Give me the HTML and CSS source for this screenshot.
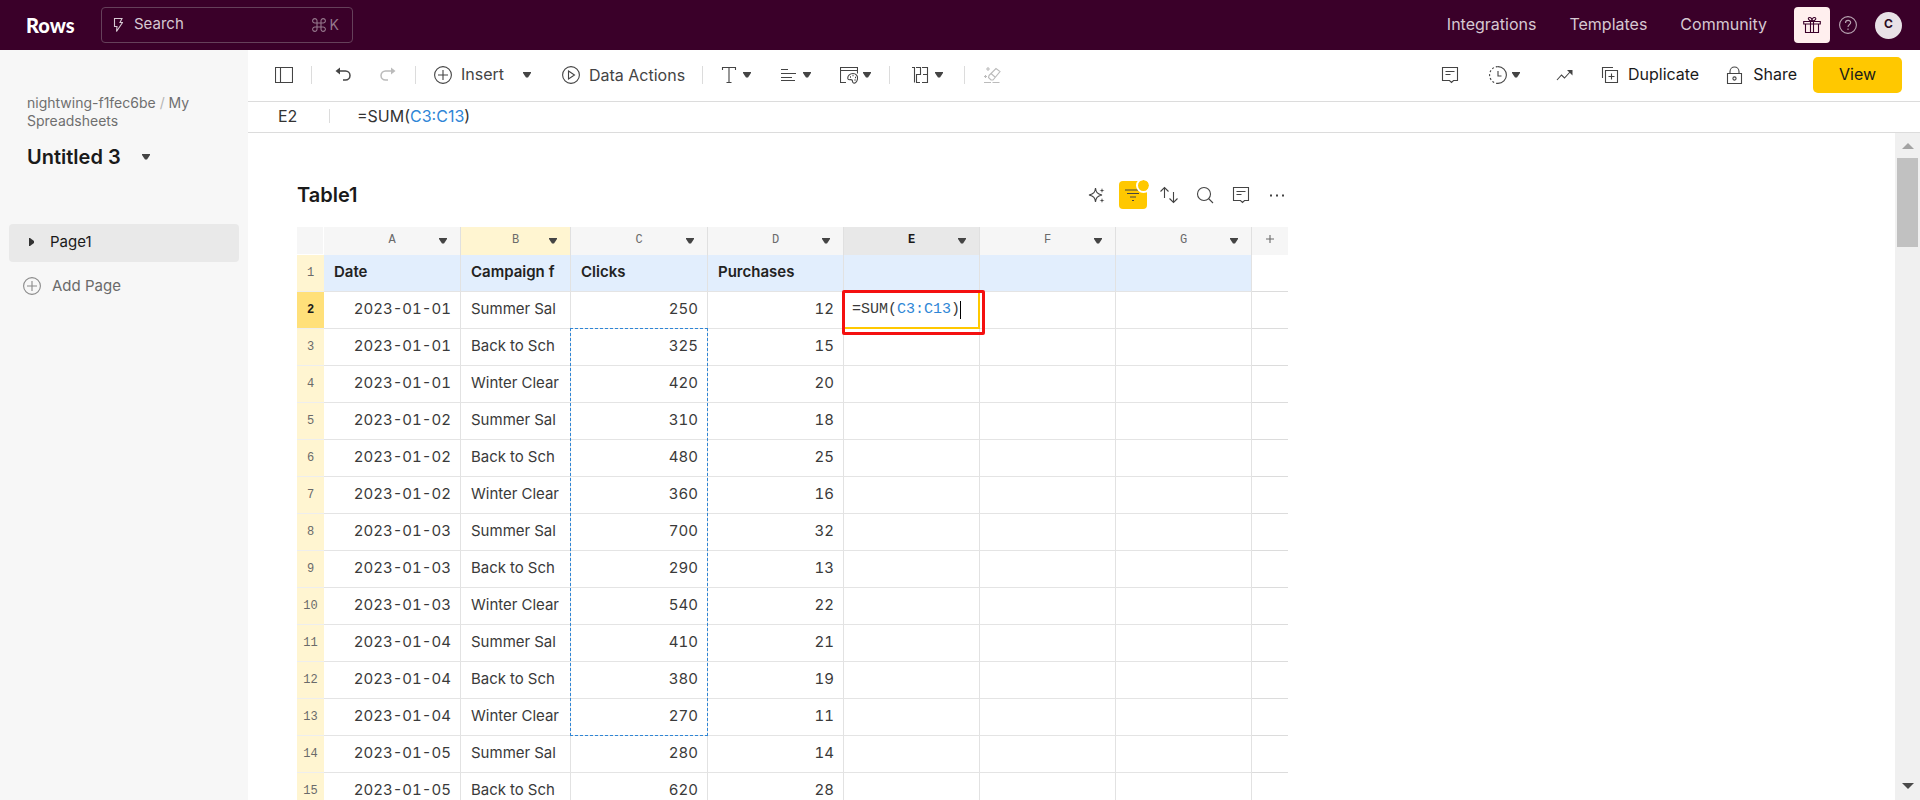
FILE: index.html
```html
<!DOCTYPE html>
<html lang="en">
<head>
<meta charset="utf-8">
<title>Untitled 3 - Rows</title>
<link rel="stylesheet" href="styles.css">
</head>
<body>
<svg class="defs" aria-hidden="true">
  <symbol id="comment" viewBox="0 0 18 18"><path d="M1.5 1.5h15v13h-4l-2 2-2-2h-7zM4.500 5.500h9M4.500 8.500h5"/></symbol>
  <symbol id="caret" viewBox="0 0 8 6"><path d="M0 0h8v1L5 5.500H3L0 1z"/></symbol>
  <symbol id="plus-circle" viewBox="0 0 18 18"><circle cx="9" cy="9" r="8.400"/><path d="M9 4v10M4 9h10"/></symbol>
</svg>

<header class="topbar">
  <a class="logo" href="#">Rows</a>
  <label class="search">
    <svg class="icon bolt" viewBox="0 0 10 14"><path d="M1.500.5h7.500L7 4.500h2.500l-6 9 .5-5H1.500z"/></svg>
    <input type="text" placeholder="Search" aria-label="Search">
    <svg class="icon command" viewBox="0 0 14 14"><path d="M5 5h4v4H5zM5 5H3a2.200 2.200 0 1 1 2-2zM9 5V3a2.200 2.200 0 1 1 2 2zM9 9h2a2.200 2.200 0 1 1-2 2zM5 9v2a2.200 2.200 0 1 1-2-2z"/></svg>
    <kbd>K</kbd>
  </label>
  <nav class="topnav">
    <a href="#">Integrations</a>
    <a href="#">Templates</a>
    <a href="#">Community</a>
  </nav>
  <button class="gift" aria-label="What's new"><svg class="icon" viewBox="0 0 18 18"><path d="M.7 5.500h16.600v2.500H.7zM2.500 8v8.500h13V8M7.500 5.500v11M10.500 5.500v11M9 5C5 5 4.500 1.500 6.500 1.500S9 3.500 9 5C9 3.500 9.500 1.500 11.500 1.500s2 3.500-2.500 3.500z"/></svg></button>
  <button class="help" aria-label="Help"><svg class="icon" viewBox="0 0 18 18"><circle cx="9" cy="9" r="8.400"/><path d="M6.500 7c0-3.500 5.200-3.300 5.200-.4C11.700 8.500 9 8.500 9 11M9 12.500v1.500"/></svg></button>
  <button class="avatar">C</button>
</header>

<div class="shell">
  <aside class="sidebar">
    <p class="crumbs"><a href="#">nightwing-f1fec6be</a> <span class="slash">/</span> <a href="#">My Spreadsheets</a></p>
    <button class="doc-title"><span>Untitled 3</span><svg class="caret"><use href="#caret"/></svg></button>
    <a class="page-link" href="#"><svg class="expander" viewBox="0 0 5 8"><path d="M0 0h1l4 3v2L1 8H0z"/></svg>Page1</a>
    <button class="add-page"><svg class="icon"><use href="#plus-circle"/></svg>Add Page</button>
  </aside>

  <main class="main">
    <div class="toolbar">
      <button class="tool" aria-label="Toggle sidebar"><svg class="icon" viewBox="0 0 18 18"><path d="M.5 1.500h17v15H.5zM5.500 1.500v15"/></svg></button>
      <span class="sep"></span>
      <button class="tool undo" aria-label="Undo"><svg class="icon" viewBox="0 0 18 18"><path d="M5 5h6.500a4.500 4.500 0 0 1 0 9H9" stroke-width="1.500"/><path class="solid" d="M1.500 5L6 1.500v7z"/></svg></button>
      <button class="tool redo faded" aria-label="Redo"><svg class="icon" viewBox="0 0 18 18"><path d="M13 5H6.500a4.500 4.500 0 0 0 0 9H9" stroke-width="1.500"/><path class="solid" d="M16.500 5L12 1.500v7z"/></svg></button>
      <span class="sep"></span>
      <button class="tool insert"><svg class="icon"><use href="#plus-circle"/></svg><span>Insert</span><svg class="caret"><use href="#caret"/></svg></button>
      <button class="tool actions"><svg class="icon" viewBox="0 0 18 18"><circle cx="9" cy="9" r="8.400"/><path d="M6.500 5l6 4-6 4z"/></svg><span>Data Actions</span></button>
      <span class="sep"></span>
      <button class="tool drop" aria-label="Text format"><svg class="icon" viewBox="0 0 18 18"><path d="M2.500 4V1.500h13V4M9 1.500v15M6.500 16.500h5"/></svg><svg class="caret"><use href="#caret"/></svg></button>
      <button class="tool drop" aria-label="Alignment"><svg class="icon" viewBox="0 0 18 18"><path d="M1 3.500h7M1 7.500h15M1 11.500h11M1 14.500h14"/></svg><svg class="caret"><use href="#caret"/></svg></button>
      <button class="tool drop" aria-label="Table style"><svg class="icon" viewBox="0 0 18 18"><path d="M6 16.500H.5v-15h17v6M.5 4.500h17"/><path d="M8 13c-1-3 2-5.500 5-5.500s5 2.500 4.500 5.500-2.500 4.500-4 4-.5-2-1.500-3-3 .5-4-1z"/><path d="M10 11h1M12.500 9.500h1M15 11.500h1M14.500 14h1" stroke-width="1.300"/></svg><svg class="caret"><use href="#caret"/></svg></button>
      <span class="sep"></span>
      <button class="tool drop number" aria-label="Number format"><svg class="icon" viewBox="0 0 18 18"><path d="M1 1.500h2.500v15M5 1.500h4.500v7H5.500v8H9M11 1.500h5.500v15H11M12 8.500h4.500"/></svg><svg class="caret"><use href="#caret"/></svg></button>
      <span class="sep last"></span>
      <button class="tool faded" aria-label="Clear format"><svg class="icon" viewBox="0 0 18 18"><path d="M6 9.500L13 2.500l4 3-7 8.500H8l-2.500-2.500zM8 7.500l4 3.500M1 16.500h7M9.500 16.500h7" /><path d="M5 1v4M3 3h4M2.500 9v3M1 10.500h3"/></svg></button>

      <div class="toolbar-right">
        <button class="tool" aria-label="Comments"><svg class="icon"><use href="#comment"/></svg></button>
        <button class="tool history" aria-label="History"><svg class="icon" viewBox="0 0 18 18"><path d="M9 .6a8.400 8.400 0 0 1 0 16.800M9 5v5h3.500"/><path d="M9 17.400A8.400 8.400 0 0 1 9 .6" stroke-dasharray="2 2"/></svg><svg class="caret"><use href="#caret"/></svg></button>
        <button class="tool trend" aria-label="Chart"><svg class="icon" viewBox="0 0 18 18"><path d="M1 14l4.500-5 3 3L14 6"/><path class="solid" d="M11 4h5.500v5.500z"/></svg></button>
        <button class="tool dark duplicate"><svg class="icon" viewBox="0 0 18 18"><path d="M4.500 4.500h12v12h-12zM1.500 12V1.500H12M10.500 7.500v6M7.500 10.500h6"/></svg><span>Duplicate</span></button>
        <button class="tool dark share"><svg class="icon" viewBox="0 0 18 18"><path d="M1.500 7.500h14v10h-14zM4 7.500V5.500a4.500 4.500 0 0 1 9 0v2"/><circle cx="8.500" cy="12.500" r="1.600"/></svg><span>Share</span></button>
        <button class="view">View</button>
      </div>
    </div>

    <div class="formula-bar">
      <output class="cell-name">E2</output>
      <span class="sep"></span>
      <div class="formula" contenteditable="true" role="textbox" aria-label="Formula">=SUM(<span class="ref">C3:C13</span>)</div>
    </div>

    <div class="workspace">
      <section class="sheet">
        <div class="sheet-head">
          <h2>Table1</h2>
          <div class="sheet-tools">
            <button aria-label="AI"><svg class="icon" viewBox="0 0 18 18"><path d="M7.500 2C8 6 9 8 14 9c-5 1-6 3-6.500 7C7 12 6 10 1 9c5-1 6-3 6.500-7z"/><path class="solid" d="M14 2l.6 1.900 1.900.6-1.900.6L14 7l-.6-1.900-1.900-.6 1.900-.6zM14 12l.6 1.900 1.900.6-1.900.6L14 17l-.6-1.900-1.900-.6 1.900-.6z"/></svg></button>
            <button class="filter" aria-label="Filter"><svg class="icon" viewBox="0 0 18 18"><path d="M1 4h16M3 7.500h12M6 11h6M8 14.500h2"/></svg></button>
            <button aria-label="Sort"><svg class="icon" viewBox="0 0 18 18"><path d="M4.500 12V1.500M.5 5.500l4-4 4 4M13.500 6v10.500M9.500 12.500l4 4 4-4"/></svg></button>
            <button aria-label="Search table"><svg class="icon" viewBox="0 0 18 18"><circle cx="8" cy="8" r="6.500"/><path d="M12.500 12.500l4.500 4.500"/></svg></button>
            <button aria-label="Table comments"><svg class="icon"><use href="#comment"/></svg></button>
            <button aria-label="More"><svg class="icon" viewBox="0 0 18 18"><path class="solid" d="M2 8.500h2v2H2zM8 8.500h2v2H8zM14 8.500h2v2h-2z"/></svg></button>
          </div>
        </div>

        <table class="grid">
          <colgroup><col class="c-num"><col class="c-wide"><col class="c-narrow"><col class="c-wide"><col><col><col><col><col class="c-add"></colgroup>
          <thead>
            <tr>
              <th></th>
              <th>A<svg class="caret"><use href="#caret"/></svg></th>
              <th class="filtered">B<svg class="caret"><use href="#caret"/></svg></th>
              <th>C<svg class="caret"><use href="#caret"/></svg></th>
              <th>D<svg class="caret"><use href="#caret"/></svg></th>
              <th class="active">E<svg class="caret"><use href="#caret"/></svg></th>
              <th>F<svg class="caret"><use href="#caret"/></svg></th>
              <th>G<svg class="caret"><use href="#caret"/></svg></th>
              <th class="add"><svg class="icon" viewBox="0 0 8 8"><path d="M4 0v8M0 4h8"/></svg></th>
            </tr>
          </thead>
          <tbody>
            <tr class="titles"><th>1</th><td>Date</td><td>Campaign f</td><td>Clicks</td><td>Purchases</td><td></td><td></td><td></td><td class="extra"></td></tr>
            <tr><th class="active">2</th><td class="num">2023-01-01</td><td>Summer Sal</td><td class="num">250</td><td class="num">12</td><td class="editing"><div class="editor" contenteditable="true" role="textbox" aria-label="Cell E2">=SUM(<span class="ref">C3:C13</span>)<span class="cursor"></span></div><span class="callout"></span></td><td></td><td></td><td class="extra"></td></tr>
            <tr><th>3</th><td class="num">2023-01-01</td><td>Back to Sch</td><td class="num">325<span class="range"></span></td><td class="num">15</td><td></td><td></td><td></td><td class="extra"></td></tr>
            <tr><th>4</th><td class="num">2023-01-01</td><td>Winter Clear</td><td class="num">420</td><td class="num">20</td><td></td><td></td><td></td><td class="extra"></td></tr>
            <tr><th>5</th><td class="num">2023-01-02</td><td>Summer Sal</td><td class="num">310</td><td class="num">18</td><td></td><td></td><td></td><td class="extra"></td></tr>
            <tr><th>6</th><td class="num">2023-01-02</td><td>Back to Sch</td><td class="num">480</td><td class="num">25</td><td></td><td></td><td></td><td class="extra"></td></tr>
            <tr><th>7</th><td class="num">2023-01-02</td><td>Winter Clear</td><td class="num">360</td><td class="num">16</td><td></td><td></td><td></td><td class="extra"></td></tr>
            <tr><th>8</th><td class="num">2023-01-03</td><td>Summer Sal</td><td class="num">700</td><td class="num">32</td><td></td><td></td><td></td><td class="extra"></td></tr>
            <tr><th>9</th><td class="num">2023-01-03</td><td>Back to Sch</td><td class="num">290</td><td class="num">13</td><td></td><td></td><td></td><td class="extra"></td></tr>
            <tr><th>10</th><td class="num">2023-01-03</td><td>Winter Clear</td><td class="num">540</td><td class="num">22</td><td></td><td></td><td></td><td class="extra"></td></tr>
            <tr><th>11</th><td class="num">2023-01-04</td><td>Summer Sal</td><td class="num">410</td><td class="num">21</td><td></td><td></td><td></td><td class="extra"></td></tr>
            <tr><th>12</th><td class="num">2023-01-04</td><td>Back to Sch</td><td class="num">380</td><td class="num">19</td><td></td><td></td><td></td><td class="extra"></td></tr>
            <tr><th>13</th><td class="num">2023-01-04</td><td>Winter Clear</td><td class="num">270</td><td class="num">11</td><td></td><td></td><td></td><td class="extra"></td></tr>
            <tr><th>14</th><td class="num">2023-01-05</td><td>Summer Sal</td><td class="num">280</td><td class="num">14</td><td></td><td></td><td></td><td class="extra"></td></tr>
            <tr><th>15</th><td class="num">2023-01-05</td><td>Back to Sch</td><td class="num">620</td><td class="num">28</td><td></td><td></td><td></td><td class="extra"></td></tr>
          </tbody>
        </table>
      </section>
      <div class="scrollbar">
        <svg class="arrow up" viewBox="0 0 12 6"><path d="M6 0l6 6H0z"/></svg>
        <div class="thumb"></div>
        <svg class="arrow down" viewBox="0 0 12 6"><path d="M0 0h12L6 6z"/></svg>
      </div>
    </div>
  </main>
</div>
</body>
</html>
```
FILE: styles.css
```css
* { box-sizing: border-box; }

body {
  margin: 0;
  height: 100vh;
  display: flex;
  flex-direction: column;
  overflow: hidden;
  background: #fff;
  color: #1a1a1a;
  font: 15px/20px Inter, "Liberation Sans", sans-serif;
}

a { color: inherit; text-decoration: none; }

button {
  margin: 0;
  padding: 0;
  border: 0;
  background: none;
  color: inherit;
  font: inherit;
  white-space: nowrap;
  display: flex;
  align-items: center;
  flex: none;
}

.defs { position: absolute; width: 0; height: 0; }

.icon {
  width: 18px;
  height: 18px;
  flex: none;
  fill: none;
  stroke: currentColor;
  stroke-width: 1.1;
}
.icon .solid { fill: currentColor; stroke: none; }

.caret { width: 8px; height: 6px; flex: none; fill: #444; }

.sep { width: 1px; height: 18px; flex: none; background: #dcdcdc; }

.ref { color: #2f86d6; }

/* Top bar */

.topbar {
  height: 50px;
  flex: none;
  display: flex;
  align-items: center;
  padding: 0 18px 0 26px;
  background: #3a0029;
  color: #d6c8d2;
}

.logo {
  width: 75px;
  color: #fff;
  font-family: Lato, sans-serif;
  font-size: 20px;
  font-weight: 900;
}

.search {
  width: 252px;
  height: 36px;
  display: flex;
  align-items: center;
  padding: 0 13px 0 11px;
  border: 1px solid #65405a;
  border-radius: 4px;
}
.search input {
  flex: 1;
  min-width: 0;
  padding: 0 0 2px 11px;
  border: 0;
  outline: 0;
  background: none;
  color: inherit;
  font: inherit;
}
.search input::placeholder { color: #d6c8d2; opacity: 1; }
.search .bolt { width: 10px; height: 14px; }
.search .command { width: 14px; height: 14px; color: #94768b; }
.search kbd { margin-left: 4px; color: #94768b; font: 14px/20px Inter, sans-serif; }

.topnav {
  display: flex;
  gap: 33px;
  margin-left: auto;
  padding-bottom: 2px;
  font-size: 16px;
}

.gift {
  width: 36px;
  height: 36px;
  margin-left: 27px;
  justify-content: center;
  border-radius: 4px;
  background: #ffefee;
  color: #3a0029;
}
.help { margin-left: 9px; color: #b9a5b3; }
.avatar {
  width: 27px;
  height: 27px;
  margin-left: 18px;
  padding-bottom: 2px;
  justify-content: center;
  border-radius: 50%;
  background: #e8e1e6;
  color: #2b0a20;
  font-size: 12px;
  font-weight: 700;
}

/* Sidebar */

.shell { flex: 1; min-height: 0; display: flex; }

.sidebar {
  width: 248px;
  flex: none;
  padding: 44px 9px 0;
  background: #f7f7f7;
}

.crumbs {
  margin: 0 18px;
  color: #6f6f6f;
  font-size: 14px;
  line-height: 18px;
}
.slash { color: #b5b5b5; }

.doc-title {
  gap: 21px;
  margin: 14px 18px 54px;
  font-size: 20px;
  font-weight: 600;
  line-height: 26px;
}

.page-link {
  height: 38px;
  display: flex;
  align-items: center;
  gap: 16px;
  padding: 0 20px 2px;
  border-radius: 4px;
  background: #e9e9e9;
}
.expander { width: 5px; height: 8px; fill: #333; }

.add-page {
  height: 48px;
  gap: 11px;
  padding: 0 14px;
  color: #6a6a6a;
}
.add-page .icon { color: #8a8a8a; }

/* Toolbar */

.main { flex: 1; min-width: 0; display: flex; flex-direction: column; }

.toolbar {
  height: 52px;
  flex: none;
  display: flex;
  align-items: center;
  padding: 0 18px 2px 27px;
  border-bottom: 1px solid #dcdcdc;
  color: #444;
  font-size: 16px;
}
.toolbar .sep { margin-left: 18px; }
.tool .caret { margin-left: 5px; }
.undo { margin-left: 22px; }
.faded { color: #bbb; margin-left: 18px; }
.toolbar .redo { margin-left: 27px; }
.insert, .actions { gap: 9px; }
.insert { width: 97px; margin-left: 18px; }
.insert span { padding-bottom: 2px; }
.insert .caret { margin-left: auto; }
.actions { width: 122px; margin-left: 31px; }
.drop { margin-left: 17px; }
.drop + .drop { margin-left: 29px; }
.toolbar .number { margin-left: 21px; }
.number .caret { margin-left: 6px; }
.toolbar .last { margin-left: 21px; }

.toolbar-right { display: flex; align-items: center; margin-left: auto; }
.history { margin-left: 30px; }
.trend { margin-left: 36px; }
.dark span { color: #1a1a1a; padding-bottom: 2px; }
.duplicate { gap: 9px; margin-left: 27px; }
.share { gap: 9px; margin-left: 27px; }
.view {
  width: 89px;
  height: 36px;
  margin-left: 16px;
  padding-bottom: 2px;
  justify-content: center;
  border-radius: 5px;
  background: #ffc800;
  color: #1a1a1a;
}

.formula-bar {
  height: 31px;
  flex: none;
  display: flex;
  align-items: center;
  padding: 0 30px 2px;
  border-bottom: 1px solid #dcdcdc;
  color: #333;
  font-size: 16px;
}
.formula-bar .sep { height: 14px; }
.cell-name { width: 51px; }
.formula { flex: 1; margin-left: 27px; outline: 0; }

/* Sheet */

.workspace { flex: 1; min-height: 0; display: flex; }

.sheet {
  flex: 1;
  min-width: 0;
  overflow: hidden;
  padding: 48px 0 0 49px;
}

.sheet-head {
  max-width: 994px;
  display: flex;
  align-items: center;
  justify-content: space-between;
  margin-bottom: 18px;
}
.sheet-head h2 { margin: 0; font-size: 20px; font-weight: 600; line-height: 28px; }

.sheet-tools { display: flex; gap: 8px; color: #444; }
.sheet-tools button { position: relative; width: 28px; height: 28px; justify-content: center; }
.sheet-tools .filter { border-radius: 4px; background: #ffc800; }
.filter::after {
  content: "";
  position: absolute;
  top: -3px;
  right: -4px;
  width: 11px;
  height: 11px;
  border: 2px solid #fff;
  border-radius: 50%;
  background: #ffc800 padding-box;
}

.grid {
  width: 991px;
  table-layout: fixed;
  border-spacing: 0;
  color: #3a3a3a;
  font-variant-numeric: tabular-nums;
}
.grid col { width: 136px; }
.grid .c-num { width: 27px; }
.grid .c-wide { width: 137px; }
.grid .c-narrow { width: 110px; }
.grid .c-add { width: 36px; }

.grid th {
  position: relative;
  padding: 0;
  font: 12px/16px "Liberation Mono", monospace;
  color: #6a6a6a;
}
.grid thead th {
  height: 28px;
  padding-bottom: 2px;
  border-right: 1px solid #e0e0e0;
  background: #f6f6f6;
}
.grid thead th:first-child { border-right-color: #fff; border-bottom: 1px solid #fff; }
.grid thead th.filtered { background: #fff5d1; }
.grid thead th.active { background: #e8e8e8; color: #1a1a1a; font-weight: 700; }
.grid thead .add { border-right: 0; }
.add .icon { width: 8px; height: 8px; }
.grid thead .caret { position: absolute; right: 13px; top: 11px; }

.grid tbody th { background: #fff5d1; border-bottom: 1px solid #eee; }
.grid tbody th.active { background: #ffe07a; color: #1a1a1a; font-weight: 700; }

.grid td {
  position: relative;
  height: 37px;
  padding: 0 9px 2px 10px;
  border-right: 1px solid #e2e2e2;
  border-bottom: 1px solid #e4e4e4;
  white-space: nowrap;
}
.grid .num { text-align: right; }
.grid .extra { border-right: 0; border-bottom-color: #dcdcdc; }
.titles td { background: #e2eefd; color: #222; font-weight: 600; }
.titles .extra { background: none; }

.range {
  position: absolute;
  z-index: 1;
  top: -1px;
  left: -1px;
  right: -1px;
  height: calc(11 * 37px + 1px);
  border: 1px dashed #2f86d6;
}

.editor {
  position: absolute;
  inset: 0 -1px -1px 0;
  display: flex;
  align-items: center;
  padding-left: 8px;
  border: solid #ffc800;
  border-width: 0 2px 2px 0;
  background: #fff;
  outline: 0;
  font-family: "Liberation Mono", monospace;
}
.cursor { width: 1px; height: 18px; background: #000; }
.callout {
  position: absolute;
  z-index: 1;
  inset: -2px -6px -7px -2px;
  border: 3px solid #f41010;
  border-radius: 2px;
}

/* Scrollbar */

.scrollbar {
  width: 25px;
  flex: none;
  display: flex;
  flex-direction: column;
  align-items: center;
  padding: 10px 2px 11px;
  background: #f0f0f0;
}
.arrow { width: 12px; height: 6px; }
.up { fill: #a3a3a3; }
.down { fill: #4a4a4a; margin-top: auto; }
.thumb { width: 21px; height: 89px; margin-top: 9px; background: #c1c1c1; }
```
